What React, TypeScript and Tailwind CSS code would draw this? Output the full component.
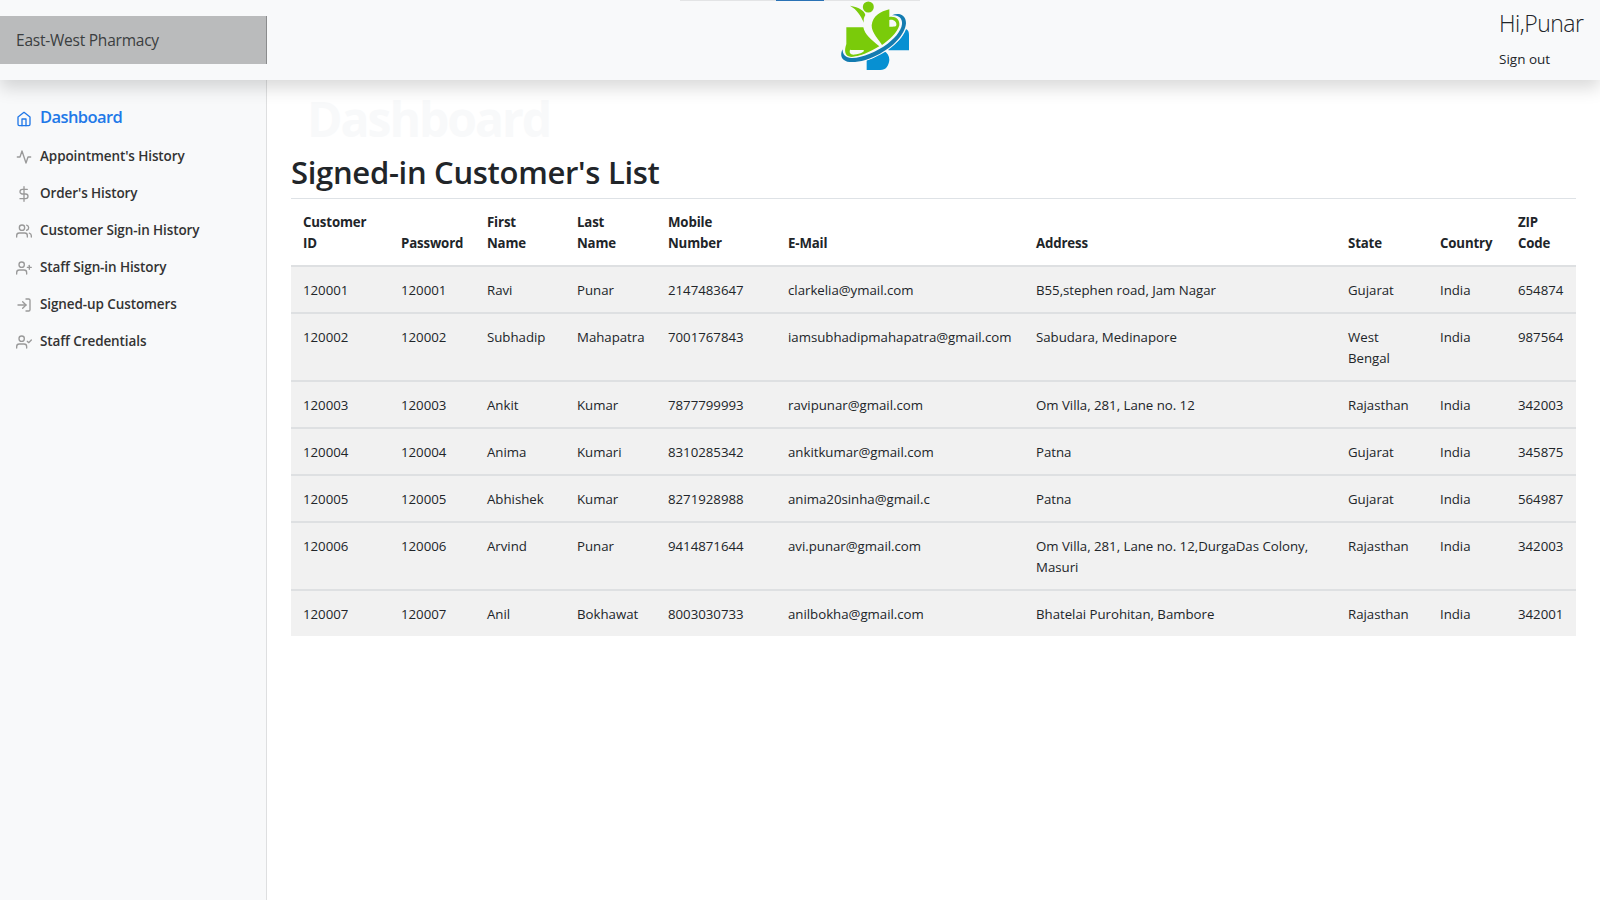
import type { ReactNode } from 'react';
import { FiActivity, FiDollarSign, FiHome, FiLogIn, FiUserCheck, FiUserPlus, FiUsers } from 'react-icons/fi';

const links = [
  { icon: FiActivity, label: "Appointment's History" },
  { icon: FiDollarSign, label: "Order's History" },
  { icon: FiUsers, label: 'Customer Sign-in History' },
  { icon: FiUserPlus, label: 'Staff Sign-in History' },
  { icon: FiLogIn, label: 'Signed-up Customers' },
  { icon: FiUserCheck, label: 'Staff Credentials' },
];

const headings = [
  'Customer ID', 'Password', 'First Name', 'Last Name', 'Mobile Number',
  'E-Mail', 'Address', 'State', 'Country', 'ZIP Code',
];

const rows = [
  ['120001', '120001', 'Ravi', 'Punar', '2147483647', 'clarkelia@ymail.com', 'B55,stephen road, Jam Nagar', 'Gujarat', 'India', '654874'],
  ['120002', '120002', 'Subhadip', 'Mahapatra', '7001767843', 'iamsubhadipmahapatra@gmail.com', 'Sabudara, Medinapore', 'West Bengal', 'India', '987564'],
  ['120003', '120003', 'Ankit', 'Kumar', '7877799993', 'ravipunar@gmail.com', 'Om Villa, 281, Lane no. 12', 'Rajasthan', 'India', '342003'],
  ['120004', '120004', 'Anima', 'Kumari', '8310285342', 'ankitkumar@gmail.com', 'Patna', 'Gujarat', 'India', '345875'],
  ['120005', '120005', 'Abhishek', 'Kumar', '8271928988', 'anima20sinha@gmail.c', 'Patna', 'Gujarat', 'India', '564987'],
  ['120006', '120006', 'Arvind', 'Punar', '9414871644', 'avi.punar@gmail.com', 'Om Villa, 281, Lane no. 12,DurgaDas Colony, Masuri', 'Rajasthan', 'India', '342003'],
  ['120007', '120007', 'Anil', 'Bokhawat', '8003030733', 'anilbokha@gmail.com', 'Bhatelai Purohitan, Bambore', 'Rajasthan', 'India', '342001'],
];

function Row({ className, children }: { className: string; children: ReactNode }) {
  return (
    <div role="row" className={`grid grid-cols-[98px_86px_90px_91px_120px_248px_312px_92px_78px_70px] ${className}`}>
      {children}
    </div>
  );
}

function Logo() {
  return (
    <svg className="h-20 w-[110px]" viewBox="0 0 330 240" fill="none">
      <circle cx="145" cy="21" r="16.5" fill="#7acb0a" />
      <path d="M90 17C118 22 134 32 136 45C131 53 130 60 132 68C120 44 112 30 90 17Z" fill="#7acb0a" />
      <path d="M79 82H130C134 103 152 118 178 139C150 156 118 171 92 171C74 168 72 152 79 132Z" fill="#7acb0a" />
      <path d="M208 28V51C226 48 240 58 238 76C232 98 208 120 186 135C180 122 154 100 155 76C158 48 182 34 208 28Z" fill="#7acb0a" />
      <path d="M208 60C221 57 231 66 229 76C228 81 219 80 208 80Z" fill="#f8f9fa" />
      <path d="M90 149C98 151 107 150 128 150C139 150 128 160 110 163C101 165 98 165 94 163C89 160 88 155 90 149Z" fill="#f8f9fa" />
      <path d="M258 87C265 90 267 97 267 105V151H205V146C230 131 249 111 258 87Z" fill="#0790d2" />
      <path d="M140 181C160 175 176 165 190 152C202 157 208 167 208 180C206 198 198 210 181 210H140Z" fill="#0790d2" />
      <path
        d="M216 46C234 38 258 42 258 70C255 105 218 141 180 161C145 180 107 190 82 185C64 180 59 165 68 148C67 164 78 175 97 174C128 173 170 155 203 131C232 109 248 84 246 66C244 51 232 46 216 46Z"
        fill="#137bb0"
        stroke="#f8f9fa"
        strokeWidth="6"
        paintOrder="stroke"
      />
    </svg>
  );
}

export default function App() {
  return (
    <div className="flex h-[900px] w-[1600px] flex-col overflow-hidden bg-white font-['Open_Sans','Noto_Sans',sans-serif] text-[#212529]">
      <header className="relative z-10 flex h-20 shrink-0 items-center bg-[#f8f9fa] shadow-[0_8px_16px_rgba(0,0,0,0.15)]">
        <div className="flex h-12 w-[267px] items-center bg-[#babbbc] pt-0.5 pl-4 text-[15.5px] tracking-[-0.23px] text-[#3b3e40] shadow-[inset_-1px_0_0_rgba(0,0,0,0.25)]">
          East-West Pharmacy
        </div>
        <div className="absolute top-0 left-[680px] flex h-px w-60 justify-center bg-[#e3e4e5]">
          <div className="h-px w-12 bg-[#2a72b5]" />
        </div>
        <div className="ml-[553px]">
          <Logo />
        </div>
        <div className="ml-auto flex h-full w-[101px] flex-col">
          <div className="mt-[9px] text-[23px] leading-[29px] font-light tracking-[-0.5px] whitespace-nowrap">Hi,Punar</div>
          <a className="mt-[11px] text-[13.5px] leading-[21px]">Sign out</a>
        </div>
      </header>

      <div className="flex min-h-0 flex-1">
        <nav className="w-[267px] shrink-0 bg-[#f8f9fa] pt-6 shadow-[inset_-1px_0_0_rgba(0,0,0,0.1)]">
          <a className="flex h-[34px] items-center pl-4 text-[#2178e8]">
            <FiHome className="mt-[-4px] mr-2 size-4" />
            <span className="mt-[-7px] text-[16.5px] font-semibold tracking-[-0.6px]">Dashboard</span>
          </a>
          {links.map(({ icon: Icon, label }) => (
            <a key={label} className="flex h-[37px] items-center pl-4 text-[#333]">
              <Icon className="mt-px mr-2 size-4 text-[#999]" />
              <span className="text-[13.5px] font-semibold tracking-[-0.1px]">{label}</span>
            </a>
          ))}
        </nav>

        <main className="flex-1 px-6">
          <div className="mt-[3px] h-[68px] pl-4 text-[48px] leading-[72px] font-bold tracking-[-2px] text-[#f8f9fa]">Dashboard</div>
          <h2 className="mb-2 h-[39px] text-[31px] leading-[43px] font-semibold tracking-[-0.3px]">Signed-in Customer's List</h2>
          <div role="table" className="text-[13.25px] leading-[21px]">
            <Row className="border-t border-b-2 border-t-[#dee2e6] border-b-[#dee0e2] font-bold">
              {headings.map((h) => (
                <div key={h} className="self-end px-3 pt-[13px] pb-[11px] tracking-[-0.15px]">{h}</div>
              ))}
            </Row>
            {rows.map((cells) => (
              <Row key={cells[0]} className="border-t-2 border-[#dee0e2] bg-[#f1f1f1] nth-2:border-t-0">
                {cells.map((c, i) => (
                  <div key={i} className="pt-[13px] pr-2 pb-[11px] pl-3 tracking-[-0.02px]">{c}</div>
                ))}
              </Row>
            ))}
          </div>
        </main>
      </div>
    </div>
  );
}
